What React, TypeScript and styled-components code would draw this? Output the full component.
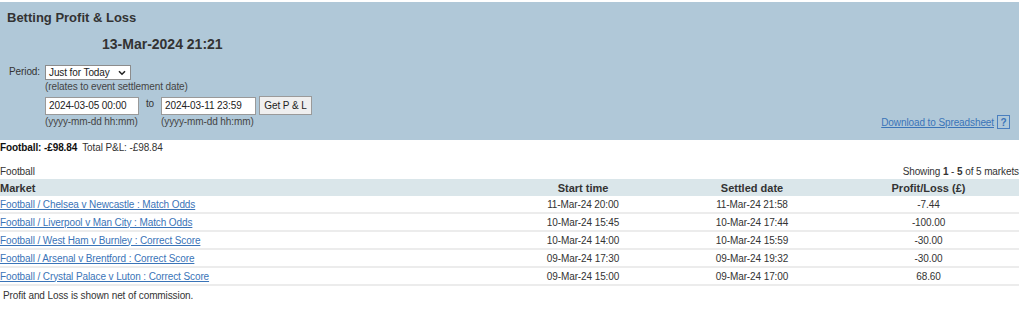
import styled, { createGlobalStyle } from 'styled-components'

const GlobalStyle = createGlobalStyle`
  html, body {
    margin: 0;
    padding: 0;
    background: #ffffff;
  }
  body {
    font-family: 'Liberation Sans', Arial, sans-serif;
    font-size: 10px;
    letter-spacing: -0.1px;
    color: #333333;
  }
`

type Market = {
  name: string
  start: string
  settled: string
  pl: string
}

const markets: Market[] = [
  { name: 'Football / Chelsea v Newcastle : Match Odds', start: '11-Mar-24 20:00', settled: '11-Mar-24 21:58', pl: '-7.44' },
  { name: 'Football / Liverpool v Man City : Match Odds', start: '10-Mar-24 15:45', settled: '10-Mar-24 17:44', pl: '-100.00' },
  { name: 'Football / West Ham v Burnley : Correct Score', start: '10-Mar-24 14:00', settled: '10-Mar-24 15:59', pl: '-30.00' },
  { name: 'Football / Arsenal v Brentford : Correct Score', start: '09-Mar-24 17:30', settled: '09-Mar-24 19:32', pl: '-30.00' },
  { name: 'Football / Crystal Palace v Luton : Correct Score', start: '09-Mar-24 15:00', settled: '09-Mar-24 17:00', pl: '68.60' },
]

const Chevron = () => (
  <svg width="8" height="6" viewBox="0 0 8 6">
    <path d="M1 1.2l3 3 3-3" fill="none" stroke="#222" strokeWidth="1.6" />
  </svg>
)

export default function App() {
  return (
    <>
      <GlobalStyle />
      <Page>
        <Panel>
          <Title>Betting Profit &amp; Loss</Title>
          <Clock>13-Mar-2024 21:21</Clock>
          <Form>
            <Label>Period:</Label>
            <Fields>
              <Select>
                <span>Just for Today</span>
                <Chevron />
              </Select>
              <Hint>(relates to event settlement date)</Hint>
              <DateRow>
                <DateGroup>
                  <DateInput $width={94}>2024-03-05 00:00</DateInput>
                  <Hint>(yyyy-mm-dd hh:mm)</Hint>
                </DateGroup>
                <To>to</To>
                <DateGroup>
                  <DateInput $width={95}>2024-03-11 23:59</DateInput>
                  <Hint>(yyyy-mm-dd hh:mm)</Hint>
                </DateGroup>
                <Button>Get P &amp; L</Button>
              </DateRow>
            </Fields>
            <Download>
              <Link href="#">Download to Spreadsheet</Link>
              <Help>?</Help>
            </Download>
          </Form>
        </Panel>

        <Summary>
          <strong>Football: -£98.84</strong>
          <span>Total P&amp;L: -£98.84</span>
        </Summary>

        <TableHead>
          <span>Football</span>
          <span>
            Showing <b>1</b> - <b>5</b> of 5 markets
          </span>
        </TableHead>

        <Table>
          <colgroup>
            <col style={{ width: 500 }} />
            <col style={{ width: 166 }} />
            <col style={{ width: 172 }} />
            <col />
          </colgroup>
          <thead>
            <tr>
              <Th $align="left">Market</Th>
              <Th>Start time</Th>
              <Th>Settled date</Th>
              <Th>Profit/Loss (£)</Th>
            </tr>
          </thead>
          <tbody>
            {markets.map((m) => (
              <tr key={m.name}>
                <Td $align="left">
                  <Link href="#">{m.name}</Link>
                </Td>
                <Td>{m.start}</Td>
                <Td>{m.settled}</Td>
                <Td>{m.pl}</Td>
              </tr>
            ))}
          </tbody>
        </Table>

        <Note>Profit and Loss is shown net of commission.</Note>
      </Page>
    </>
  )
}

const Page = styled.div`
  width: 1019px;
  padding-top: 2px;
`

const Panel = styled.div`
  background: #b0c8d8;
  padding: 8px 9px 11px 7px;
`

const Title = styled.h1`
  margin: 0;
  font-size: 13px;
  font-weight: bold;
  letter-spacing: 0;
  color: #333;
  line-height: 16px;
`

const Clock = styled.div`
  margin: 9px 0 0 95px;
  font-size: 14px;
  font-weight: bold;
  letter-spacing: 0;
  line-height: 18px;
`

const Form = styled.div`
  display: flex;
  margin-top: 12px;
  align-items: flex-start;
`

const Label = styled.div`
  width: 36px;
  padding: 1px 0 0 2px;
  line-height: 12px;
`

const Fields = styled.div`
  display: flex;
  flex-direction: column;
`

const Select = styled.div`
  width: 86px;
  height: 15px;
  box-sizing: border-box;
  border: 1px solid #8c8c8c;
  background: #fff;
  display: flex;
  align-items: center;
  justify-content: space-between;
  padding: 0 4px 0 3px;
  white-space: nowrap;
  color: #222;
`

const Hint = styled.div`
  line-height: 14px;
  white-space: nowrap;
  color: #444;
`

const DateRow = styled.div`
  display: flex;
  align-items: flex-start;
  margin-top: 3px;
`

const DateGroup = styled.div`
  display: flex;
  flex-direction: column;
`

const DateInput = styled.div<{ $width: number }>`
  height: 18px;
  box-sizing: border-box;
  width: ${({ $width }) => $width}px;
  border: 1px solid #999;
  background: #fff;
  padding: 0 3px;
  line-height: 16px;
  white-space: nowrap;
  color: #222;
`

const To = styled.div`
  width: 22px;
  text-align: center;
  line-height: 14px;
`

const Button = styled.div`
  margin: -1px 0 0 3px;
  height: 19px;
  width: 53px;
  box-sizing: border-box;
  border: 1px solid #9a9a9a;
  background: #efefef;
  text-align: center;
  line-height: 17px;
  white-space: nowrap;
  color: #222;
`

const Download = styled.div`
  margin-left: auto;
  align-self: flex-end;
  display: flex;
  align-items: center;
  gap: 3px;
`

const Link = styled.a`
  color: #3a74b8;
  text-decoration: underline;
`

const Help = styled.span`
  display: inline-flex;
  width: 13px;
  height: 14px;
  box-sizing: border-box;
  border: 1px solid #4a7fbf;
  color: #3a74b8;
  font-weight: bold;
  align-items: center;
  justify-content: center;
  font-size: 10px;
`

const Summary = styled.div`
  display: flex;
  gap: 5px;
  padding-top: 1px;
  line-height: 14px;
  strong {
    color: #111;
  }
`

const TableHead = styled.div`
  display: flex;
  justify-content: space-between;
  margin-top: 10px;
  line-height: 14px;
`

const Table = styled.table`
  width: 100%;
  border-collapse: collapse;
  table-layout: fixed;
`

const Th = styled.th<{ $align?: string }>`
  background: #dae6ea;
  text-align: ${({ $align }) => $align || 'center'};
  font-size: 11px;
  letter-spacing: 0;
  font-weight: bold;
  padding: 0;
  height: 17px;
  color: #333;
`

const Td = styled.td<{ $align?: string }>`
  text-align: ${({ $align }) => $align || 'center'};
  padding: 0;
  height: 16px;
  border-bottom: 2px solid #ececec;
`

const Note = styled.div`
  padding: 3px 0 0 3px;
  line-height: 14px;
`
